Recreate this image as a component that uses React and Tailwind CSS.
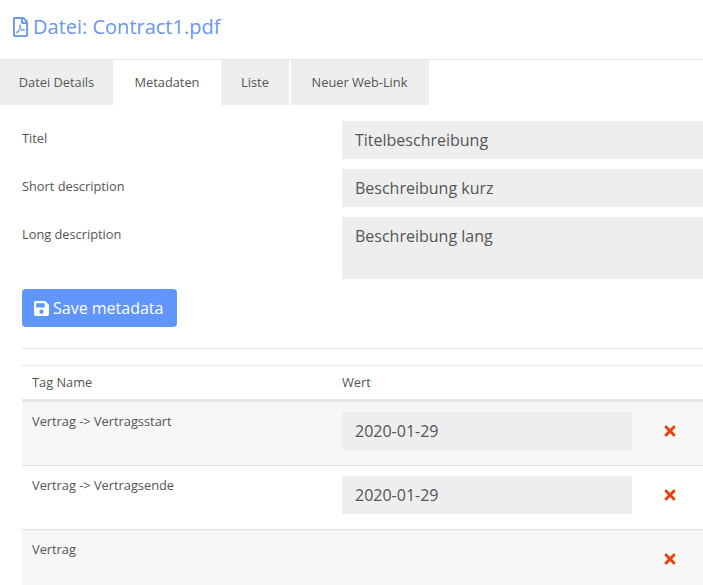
import { FaRegFilePdf, FaSave, FaTimes } from "react-icons/fa";

const tabs = [
  { label: "Datei Details", width: "w-[113px]" },
  { label: "Metadaten", width: "w-[105px]", active: true },
  { label: "Liste", width: "w-[68px]" },
  { label: "Neuer Web-Link", width: "w-[138px]" },
];

const fields = [
  { label: "Titel", value: "Titelbeschreibung", height: "h-[38px]" },
  { label: "Short description", value: "Beschreibung kurz", height: "h-[38px]" },
  { label: "Long description", value: "Beschreibung lang", height: "h-[62px]" },
];

const rows = [
  { name: "Vertrag -> Vertragsstart", date: "2020-01-29", bg: "bg-[#f7f7f7]", height: "h-[66px]" },
  { name: "Vertrag -> Vertragsende", date: "2020-01-29", bg: "bg-white", height: "h-[64px]" },
  { name: "Vertrag", bg: "bg-[#f7f7f7]", height: "h-[56px]" },
];

export default function App() {
  return (
    <div className="h-[585px] w-[703px] overflow-hidden bg-white font-['Open_Sans',sans-serif] text-[#555]">
      <div className="flex h-[60px] items-center gap-[5px] border-b border-[#e8e8e8] pl-[13px] pb-[5px] text-[20px] text-[#6b96ee]">
        <FaRegFilePdf className="h-[20px] w-[15px]" />
        <span>Datei: Contract1.pdf</span>
      </div>

      <div className="flex h-[45px] gap-[1.5px] text-[12.8px] font-medium">
        {tabs.map((tab) => (
          <div
            key={tab.label}
            className={`flex items-center justify-center ${tab.width} ${tab.active ? "bg-white" : "bg-[#eeeeee]"}`}
          >
            {tab.label}
          </div>
        ))}
      </div>

      <div className="pl-[22px] pt-[16px]">
        <div className="flex flex-col gap-[10px]">
          {fields.map((field) => (
            <div key={field.label} className="flex">
              <div className="w-[320px] pt-[8px] text-[12.8px] font-medium leading-[18px]">{field.label}</div>
              <div className={`flex-1 bg-[#eeeeee] px-[13px] pt-[8px] text-[16px] leading-[22px] ${field.height}`}>
                {field.value}
              </div>
            </div>
          ))}
        </div>

        <button className="mt-[10px] flex h-[38px] w-[155px] items-center gap-[4px] rounded-[4px] bg-[#6095fb] pl-[12px] text-[16px] font-medium text-white">
          <FaSave className="h-[17px] w-[15px]" />
          Save metadata
        </button>

        <div className="mt-[21px] border-t border-[#e5e5e5]" />

        <div className="mt-[16px] flex h-[34px] items-center border-t border-[#e5e5e5] text-[12.8px] font-medium">
          <div className="w-[320px] pl-[10px]">Tag Name</div>
          <div>Wert</div>
        </div>

        {rows.map((row, i) => (
          <div
            key={row.name}
            className={`flex ${row.height} ${row.bg} ${i === 0 ? "border-t-[3px] border-[#e5e5e5]" : "border-t border-[#e0e0e0]"}`}
          >
            <div className="w-[320px] pl-[10px] pt-[10px] text-[12.8px] font-medium leading-[18px]">{row.name}</div>
            <div className="w-[290px] pt-[10px]">
              {row.date && (
                <div className="flex h-[38px] items-center bg-[#eeeeee] px-[13px] text-[16px]">{row.date}</div>
              )}
            </div>
            <div className="mt-[10px] flex h-[38px] flex-1 items-center pl-[30px]">
              <FaTimes className="text-[16px] text-[#e8400c]" />
            </div>
          </div>
        ))}
      </div>
    </div>
  );
}
